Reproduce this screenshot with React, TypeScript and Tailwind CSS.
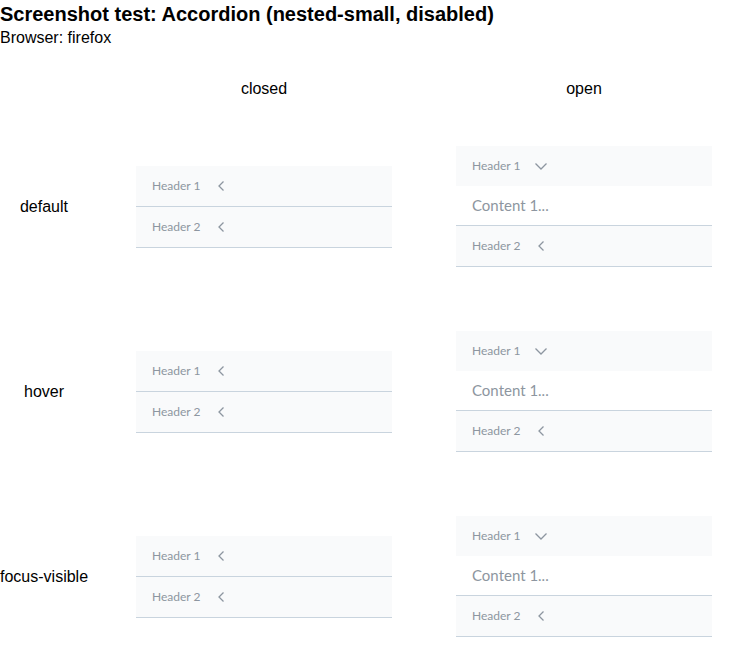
const rows = ["default", "hover", "focus-visible"];

function ChevronLeft() {
  return (
    <svg width="12" height="12" viewBox="0 0 12 12" fill="none" className="shrink-0">
      <path d="M7.5 1.5 L3 6 L7.5 10.5" stroke="#8d96a0" strokeWidth="1.3" />
    </svg>
  );
}

function ChevronDown() {
  return (
    <svg width="14" height="14" viewBox="0 0 14 14" fill="none" className="-ml-[2px] shrink-0">
      <path d="M1.5 4.5 L7 10 L12.5 4.5" stroke="#8d96a0" strokeWidth="1.3" />
    </svg>
  );
}

function Header({ label, open, border }: { label: string; open?: boolean; border?: boolean }) {
  return (
    <div
      className={`flex h-[40px] items-center gap-[16px] bg-[#f9fafb] pl-[16px] text-[12px] text-[#8d96a0] ${
        border ? "h-[41px] border-b border-[#c9d4de]" : ""
      }`}
      style={{ fontFamily: "Lato, 'Noto Sans', sans-serif" }}
    >
      <span>{label}</span>
      {open ? <ChevronDown /> : <ChevronLeft />}
    </div>
  );
}

function Accordion({ open }: { open?: boolean }) {
  return (
    <div className="w-[256px] shrink-0">
      {open ? (
        <>
          <Header label="Header 1" open />
          <div
            className="flex h-[40px] items-center border-b border-[#c9d4de] bg-white pl-[16px] text-[15px] text-[#8d96a0]"
            style={{ fontFamily: "Lato, 'Noto Sans', sans-serif" }}
          >
            Content 1...
          </div>
        </>
      ) : (
        <Header label="Header 1" border />
      )}
      <Header label="Header 2" border />
    </div>
  );
}

export default function App() {
  return (
    <div className="bg-white text-black" style={{ fontFamily: "'Liberation Sans', Arial, sans-serif" }}>
      <h1 className="text-[20px] font-bold leading-[29px]">Screenshot test: Accordion (nested-small, disabled)</h1>
      <div className="text-[16px] leading-[18px]">Browser: firefox</div>
      <div className="mt-[15px] flex h-[52px] items-center pt-[2px]">
        <div className="w-[104px] shrink-0" />
        <div className="w-[320px] shrink-0 text-center">closed</div>
        <div className="w-[320px] shrink-0 text-center">open</div>
      </div>
      {rows.map((r) => (
        <div key={r} className="flex h-[185px] items-center">
          <div className="w-[88px] shrink-0 whitespace-nowrap text-center">{r}</div>
          <div className="ml-[16px] flex w-[320px] shrink-0 justify-center">
            <Accordion />
          </div>
          <div className="flex w-[320px] shrink-0 justify-center">
            <Accordion open />
          </div>
        </div>
      ))}
    </div>
  );
}
